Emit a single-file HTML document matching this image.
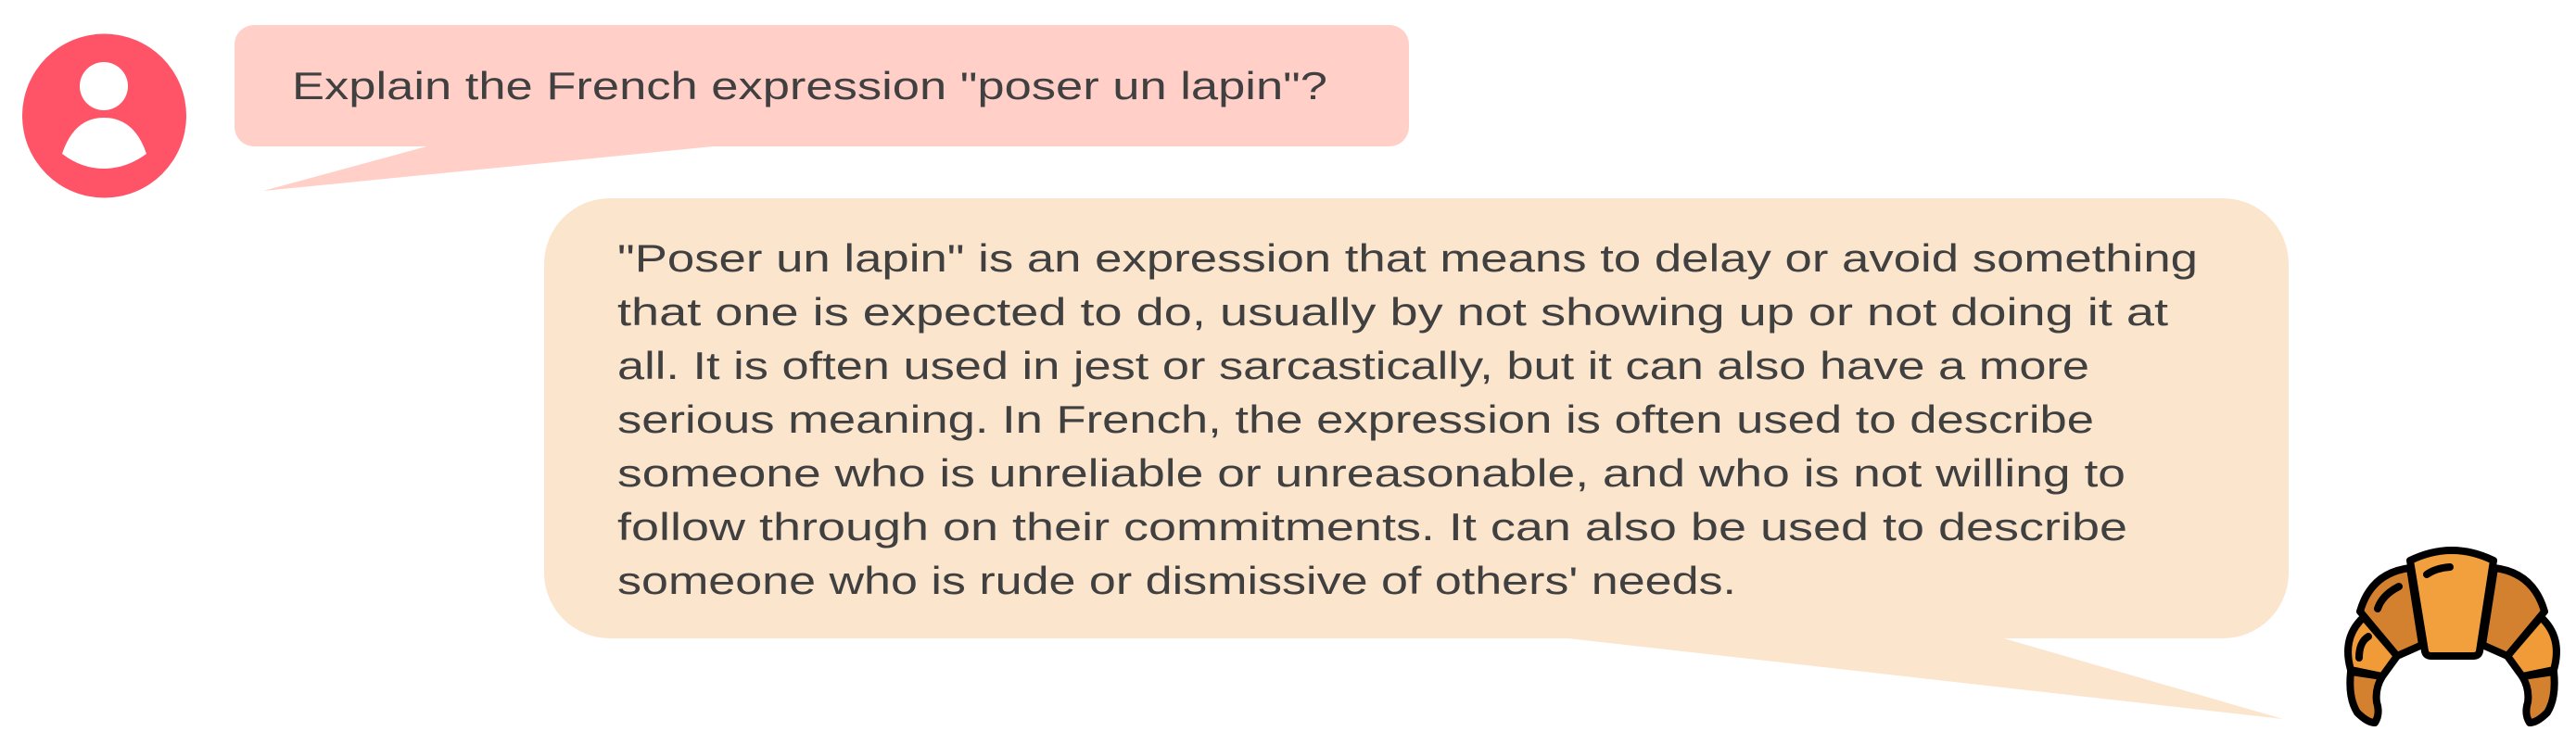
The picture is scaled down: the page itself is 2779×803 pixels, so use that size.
<!DOCTYPE html>
<html><head><meta charset="utf-8"><style>
html,body{margin:0;padding:0;background:#fff;width:2779px;height:803px;overflow:hidden}
svg{display:block}
text{font-family:"Liberation Sans",sans-serif;fill:#404040;font-size:42px}
</style></head><body>
<svg width="2779" height="803" viewBox="0 0 2779 803" xmlns="http://www.w3.org/2000/svg">
<!-- avatar -->
<circle cx="112.5" cy="125" r="88.5" fill="#FF5468"/>
<circle cx="112" cy="93" r="26" fill="#fff"/>
<path d="M67 166 Q80 127 112 127 Q145 127 158 166 Q136 182 112 182 Q88 182 67 166 Z" fill="#fff"/>
<!-- pink bubble -->
<rect x="253" y="27" width="1267" height="131" rx="21" fill="#FFCFC8"/>
<path d="M464 157 L284 206 L780 157 Z" fill="#FFCFC8"/>
<text x="315" y="107" textLength="1117" lengthAdjust="spacingAndGlyphs">Explain the French expression "poser un lapin"?</text>
<!-- peach bubble -->
<rect x="587" y="214" width="1882" height="475" rx="71" fill="#FBE5CD"/>
<path d="M1683 688 L2463 776 L2158 688 Z" fill="#FBE5CD"/>
<g>
<text x="666" y="293" textLength="1705" lengthAdjust="spacingAndGlyphs">"Poser un lapin" is an expression that means to delay or avoid something</text>
<text x="666" y="351" textLength="1673" lengthAdjust="spacingAndGlyphs">that one is expected to do, usually by not showing up or not doing it at</text>
<text x="666" y="409" textLength="1588" lengthAdjust="spacingAndGlyphs">all. It is often used in jest or sarcastically, but it can also have a more</text>
<text x="666" y="467" textLength="1593" lengthAdjust="spacingAndGlyphs">serious meaning. In French, the expression is often used to describe</text>
<text x="666" y="525" textLength="1627" lengthAdjust="spacingAndGlyphs">someone who is unreliable or unreasonable, and who is not willing to</text>
<text x="666" y="583" textLength="1629" lengthAdjust="spacingAndGlyphs">follow through on their commitments. It can also be used to describe</text>
<text x="666" y="641" textLength="1207" lengthAdjust="spacingAndGlyphs">someone who is rude or dismissive of others' needs.</text>
</g>
<!-- croissant -->
<g transform="translate(2528,593)" stroke="#000" stroke-width="8" stroke-linejoin="round" stroke-linecap="round">
  <!-- left tip -->
  <path d="M8 132 L42 137 Q34 150 36 165 Q40 178 34 187 Q26 187 15 176 Q5 160 8 132 Z" fill="#D3802F"/>
  <!-- right tip -->
  <path d="M227 132 L193 137 Q201 150 199 165 Q195 178 201 187 Q209 187 220 176 Q230 160 227 132 Z" fill="#D3802F"/>
  <!-- left lower -->
  <path d="M22 73 L58 115 L42 137 L8 130 Q-2 95 22 73 Z" fill="#F09A38"/>
  <!-- right lower -->
  <path d="M213 73 L177 115 L193 137 L227 130 Q237 95 213 73 Z" fill="#F09A38"/>
  <!-- left upper -->
  <path d="M18 67 Q30 25 72 20 L85 103 L58 115 Z" fill="#D3802F"/>
  <!-- right upper -->
  <path d="M217 67 Q205 25 163 20 L150 103 L177 115 Z" fill="#D3802F"/>
  <!-- center -->
  <path d="M72 12 Q117 -10 162 12 L147 110 Q146 115 140 115 L95 115 Q89 115 88 110 Z" fill="#F2A03E"/>
  <!-- highlights -->
  <path d="M90 27 Q100 20 115 19" fill="none"/>
  <path d="M37 64 Q42 49 60 40" fill="none"/>
  <path d="M17 117 Q17 100 27 94" fill="none"/>
</g>
</svg>
</body></html>
